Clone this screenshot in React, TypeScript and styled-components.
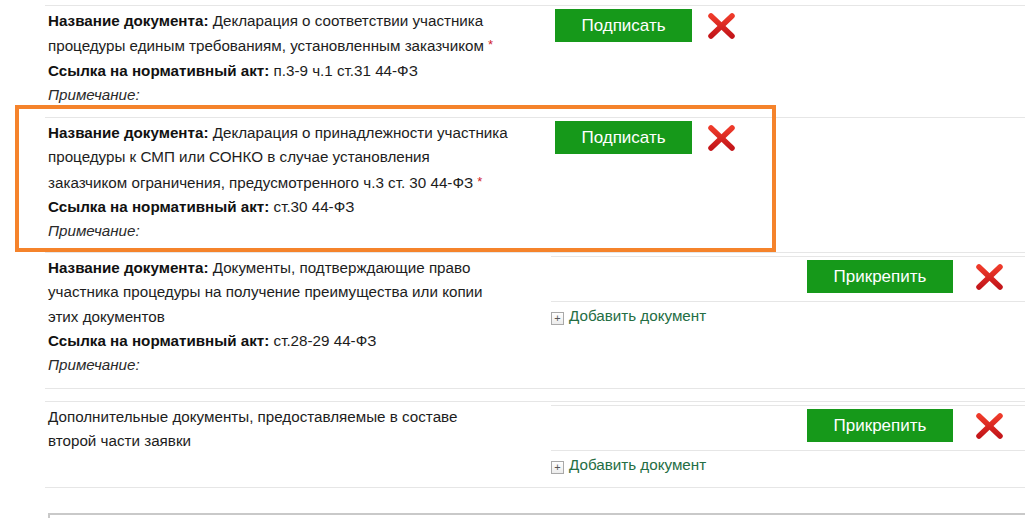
import styled, { createGlobalStyle } from "styled-components";

const GlobalStyle = createGlobalStyle`
    body {
        margin: 0;
        background: #ffffff;
        font-family: "Liberation Sans", Arial, sans-serif;
        font-size: 15.2px;
        color: #1d1d1d;
    }
`;

const Page = styled.div`
    position: relative;
    padding: 5px 0 0 45px;
    width: 980px;
`;

const DocBlock = styled.div<{ $gap?: number }>`
    border-bottom: 1px solid #e6e6e6;
    margin-top: ${(p) => p.$gap ?? 0}px;
`;

const Row = styled.div<{ $height: number }>`
    display: grid;
    grid-template-columns: 505px 475px;
    height: ${(p) => p.$height}px;
    border-top: 1px solid #e6e6e6;
    box-sizing: border-box;
`;

const Info = styled.div`
    width: 460px;
    padding: 3px 0 0 3px;
    line-height: 24.3px;
`;

const Line = styled.div``;

const Label = styled.b`
    font-weight: bold;
    color: #111;
`;

const Required = styled.span`
    color: #d0222a;
    font-size: 13px;
    vertical-align: 2px;
    margin-left: 4px;
`;

const Note = styled.i`
    color: #2a2a2a;
`;

const SignCell = styled.div`
    display: flex;
    align-items: flex-start;
    gap: 15px;
    padding: 3px 0 0 5px;
`;

const GreenButton = styled.button<{ $width: number }>`
    width: ${(p) => p.$width}px;
    height: 33px;
    background: #16991a;
    color: #ffffff;
    border: 0;
    font-family: "Liberation Sans", Arial, sans-serif;
    font-size: 17px;
    padding: 0;
    cursor: pointer;
`;

const DeleteIcon = styled.svg`
    width: 29px;
    height: 28px;
    margin-top: 3px;
    flex: none;
`;

const AttachCell = styled.div`
    padding: 3px 0 0 1px;
`;

const AttachBar = styled.div`
    display: flex;
    justify-content: flex-end;
    align-items: flex-start;
    height: 46px;
    padding-top: 3px;
    box-sizing: border-box;
    border-top: 1px solid #e6e6e6;
    border-bottom: 1px solid #e6e6e6;
`;

const IconSlot = styled.div`
    width: 72px;
    display: flex;
    justify-content: center;
`;

const AddLink = styled.a`
    display: flex;
    align-items: center;
    gap: 5px;
    padding-top: 2px;
    color: #256e44;
    font-size: 15.2px;
    line-height: 24px;
    text-decoration: none;
`;

const PlusBox = styled.span`
    width: 11px;
    height: 11px;
    border: 1px solid #a9a9a9;
    background: linear-gradient(#ffffff, #ececec);
    color: #555;
    font-size: 11px;
    line-height: 10px;
    text-align: center;
    margin-top: 4px;
`;

const Highlight = styled.div`
    position: absolute;
    left: 15px;
    top: 105px;
    width: 761px;
    height: 147px;
    border: 4px solid #f5832b;
    box-sizing: border-box;
    pointer-events: none;
`;

const InputTop = styled.div`
    margin: 25px 0 0 3px;
    height: 10px;
    border-top: 2px solid #c9c9c9;
    border-left: 2px solid #c9c9c9;
`;

const RedX = () => (
    <DeleteIcon viewBox="0 0 29 28">
        <defs>
            <linearGradient id="xg" x1="0" y1="0" x2="0" y2="1">
                <stop offset="0" stopColor="#ee3a2a" />
                <stop offset="1" stopColor="#c4161a" />
            </linearGradient>
        </defs>
        <g stroke="url(#xg)" strokeWidth="5.5" strokeLinecap="round">
            <line x1="4" y1="4" x2="25" y2="24" />
            <line x1="25" y1="4" x2="4" y2="24" />
        </g>
    </DeleteIcon>
);

const Attach = () => (
    <AttachCell>
        <AttachBar>
            <GreenButton $width={146}>Прикрепить</GreenButton>
            <IconSlot>
                <RedX />
            </IconSlot>
        </AttachBar>
        <AddLink href="#">
            <PlusBox>+</PlusBox>
            Добавить документ
        </AddLink>
    </AttachCell>
);

const Sign = () => (
    <SignCell>
        <GreenButton $width={137}>Подписать</GreenButton>
        <RedX />
    </SignCell>
);

export default function App() {
    return (
        <>
            <GlobalStyle />
            <Page>
                <DocBlock>
                    <Row $height={112}>
                        <Info>
                            <Line>
                                <Label>Название документа:</Label> Декларация о соответствии участника
                                процедуры единым требованиям, установленным заказчиком
                                <Required>*</Required>
                            </Line>
                            <Line>
                                <Label>Ссылка на нормативный акт:</Label> п.3-9 ч.1 ст.31 44-ФЗ
                            </Line>
                            <Note>Примечание:</Note>
                        </Info>
                        <Sign />
                    </Row>
                    <Row $height={135}>
                        <Info>
                            <Line>
                                <Label>Название документа:</Label> Декларация о принадлежности участника
                                процедуры к СМП или СОНКО в случае установления заказчиком ограничения,
                                предусмотренного ч.3 ст. 30 44-ФЗ
                                <Required>*</Required>
                            </Line>
                            <Line>
                                <Label>Ссылка на нормативный акт:</Label> ст.30 44-ФЗ
                            </Line>
                            <Note>Примечание:</Note>
                        </Info>
                        <Sign />
                    </Row>
                    <Row $height={136}>
                        <Info>
                            <Line>
                                <Label>Название документа:</Label> Документы, подтверждающие право
                                участника процедуры на получение преимущества или копии этих документов
                            </Line>
                            <Line>
                                <Label>Ссылка на нормативный акт:</Label> ст.28-29 44-ФЗ
                            </Line>
                            <Note>Примечание:</Note>
                        </Info>
                        <Attach />
                    </Row>
                </DocBlock>
                <DocBlock $gap={12}>
                    <Row $height={86}>
                        <Info>
                            <Line>Дополнительные документы, предоставляемые в составе второй части заявки</Line>
                        </Info>
                        <Attach />
                    </Row>
                </DocBlock>
                <InputTop />
                <Highlight />
            </Page>
        </>
    );
}
